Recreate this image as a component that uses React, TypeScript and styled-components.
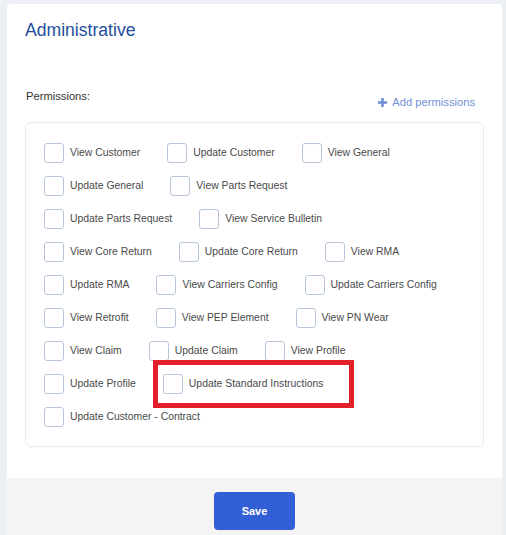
import React from "react";
import styled, { createGlobalStyle } from "styled-components";

const Global = createGlobalStyle`
  html, body {
    margin: 0;
    padding: 0;
    background: #ecf0f5;
    font-family: "Liberation Sans", Arial, sans-serif;
  }
  * { box-sizing: border-box; }
`;

const Page = styled.div`
  padding: 4px 4px 0 7px;
  height: 535px;
  overflow: hidden;
`;

const Card = styled.div`
  width: 495px;
  background: #ffffff;
  border-radius: 4px 4px 0 0;
  overflow: hidden;
`;

const Body = styled.div`
  padding: 16px 18px 31px 18px;
`;

const Title = styled.h2`
  margin: 0;
  font-size: 17.6px;
  line-height: 20px;
  font-weight: 400;
  color: #234f9e;
`;

const PermHeader = styled.div`
  margin-top: 49px;
  display: flex;
  justify-content: space-between;
  align-items: flex-start;
  padding: 0 9px 0 1px;
`;

const PermLabel = styled.span`
  font-size: 11.2px;
  line-height: 14px;
  color: #333333;
`;

const AddLink = styled.span`
  margin-top: 6px;
  display: flex;
  align-items: center;
  gap: 5px;
  font-size: 11.2px;
  line-height: 14px;
  color: #6f91d6;
  cursor: pointer;
`;

const PermBox = styled.div`
  margin-top: 13px;
  border: 1px solid #ececec;
  border-radius: 6px;
  padding: 20px 18px 19px 18px;
  display: flex;
  flex-direction: column;
  gap: 13px;
  box-shadow: 0 1px 1px rgba(0, 0, 0, 0.03);
`;

const Row = styled.div`
  display: flex;
  align-items: center;
`;

const Item = styled.label<{ $highlight?: boolean }>`
  position: relative;
  display: flex;
  align-items: center;
  margin-right: 27px;
  cursor: pointer;
  ${(p) =>
    p.$highlight
      ? `
    &::after {
      content: "";
      position: absolute;
      left: -10px;
      right: -31px;
      top: -14px;
      bottom: -14px;
      border: 5px solid #e3202a;
      pointer-events: none;
    }
  `
      : ""}
`;

const Box = styled.span`
  width: 20px;
  height: 20px;
  border: 1px solid #b7c5d9;
  border-radius: 3px;
  background: #fff;
  flex: none;
`;

const ItemText = styled.span`
  margin-left: 6px;
  font-size: 10.4px;
  line-height: 14px;
  color: #4a4a4a;
  white-space: nowrap;
`;

const Footer = styled.div`
  background: #f4f4f4;
  padding: 14px 0;
  display: flex;
  justify-content: center;
`;

const SaveButton = styled.button`
  width: 81px;
  height: 38px;
  border: none;
  border-radius: 4px;
  background: #335fd6;
  color: #ffffff;
  font-family: "Liberation Sans", Arial, sans-serif;
  font-weight: 700;
  font-size: 11px;
  cursor: pointer;
`;

const rows: string[][] = [
  ["View Customer", "Update Customer", "View General"],
  ["Update General", "View Parts Request"],
  ["Update Parts Request", "View Service Bulletin"],
  ["View Core Return", "Update Core Return", "View RMA"],
  ["Update RMA", "View Carriers Config", "Update Carriers Config"],
  ["View Retrofit", "View PEP Element", "View PN Wear"],
  ["View Claim", "Update Claim", "View Profile"],
  ["Update Profile", "Update Standard Instructions"],
  ["Update Customer - Contract"],
];

const PlusIcon = () => (
  <svg width="9" height="9" viewBox="0 0 9 9">
    <rect x="3.2" y="0" width="2.6" height="9" fill="#6f91d6" />
    <rect x="0" y="3.2" width="9" height="2.6" fill="#6f91d6" />
  </svg>
);

export default function App() {
  return (
    <Page>
      <Global />
      <Card>
        <Body>
          <Title>Administrative</Title>
          <PermHeader>
            <PermLabel>Permissions:</PermLabel>
            <AddLink>
              <PlusIcon />
              Add permissions
            </AddLink>
          </PermHeader>
          <PermBox>
            {rows.map((row, i) => (
              <Row key={i}>
                {row.map((name) => (
                  <Item key={name} $highlight={name === "Update Standard Instructions"}>
                    <Box />
                    <ItemText>{name}</ItemText>
                  </Item>
                ))}
              </Row>
            ))}
          </PermBox>
        </Body>
        <Footer>
          <SaveButton>Save</SaveButton>
        </Footer>
      </Card>
    </Page>
  );
}
